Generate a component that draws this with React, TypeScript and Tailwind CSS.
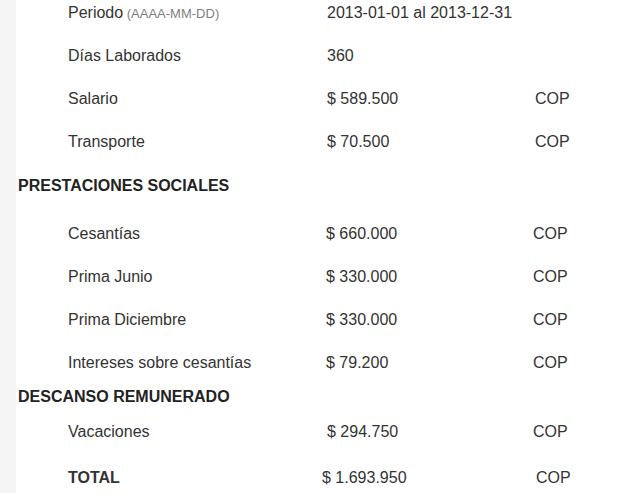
import React from "react";

type Row = {
  label: string;
  hint?: string;
  value: string;
  currency?: string;
  h: string;
  labelW: string;
  valueW: string;
  bold?: boolean;
};

const top: Row[] = [
  { label: "Periodo", hint: "(AAAA-MM-DD)", value: "2013-01-01 al 2013-12-31", h: "h-[43px]", labelW: "w-[311px]", valueW: "w-[208px]" },
  { label: "Días Laborados", value: "360", h: "h-[43px]", labelW: "w-[311px]", valueW: "w-[208px]" },
  { label: "Salario", value: "$ 589.500", currency: "COP", h: "h-[43px]", labelW: "w-[311px]", valueW: "w-[208px]" },
  { label: "Transporte", value: "$ 70.500", currency: "COP", h: "h-[43px]", labelW: "w-[311px]", valueW: "w-[208px]" },
];

const prestaciones: Row[] = [
  { label: "Cesantías", value: "$ 660.000", currency: "COP", h: "h-[43px]", labelW: "w-[310px]", valueW: "w-[207px]" },
  { label: "Prima Junio", value: "$ 330.000", currency: "COP", h: "h-[43px]", labelW: "w-[310px]", valueW: "w-[207px]" },
  { label: "Prima Diciembre", value: "$ 330.000", currency: "COP", h: "h-[43px]", labelW: "w-[310px]", valueW: "w-[207px]" },
  { label: "Intereses sobre cesantías", value: "$ 79.200", currency: "COP", h: "h-[43px]", labelW: "w-[310px]", valueW: "w-[207px]" },
];

function Line({ row }: { row: Row }) {
  return (
    <div className={`flex items-center ${row.h}`}>
      <div className={`${row.labelW} shrink-0 pl-[52px] ${row.bold ? "font-bold" : ""}`}>
        {row.label}
        {row.hint && <span className="text-[13px] text-[#808080]"> {row.hint}</span>}
      </div>
      <div className={`${row.valueW} shrink-0`}>{row.value}</div>
      <div>{row.currency}</div>
    </div>
  );
}

export default function App() {
  return (
    <div className="flex min-h-[493px] w-[641px] overflow-hidden bg-white font-['Liberation_Sans',Arial,sans-serif] text-[16px] text-[#333]">
      <div className="w-[16px] shrink-0 bg-[#f5f5f5]" />
      <div className="-mt-[9px] flex-1">
        {top.map((r) => (
          <Line key={r.label} row={r} />
        ))}

        <h3 className="flex h-[45px] items-center pl-[2px] text-[16px] font-bold text-[#222]">
          PRESTACIONES SOCIALES
        </h3>
        <div className="pt-[4px]">
          {prestaciones.map((r) => (
            <Line key={r.label} row={r} />
          ))}
        </div>

        <h3 className="flex h-[26px] items-center pl-[2px] text-[16px] font-bold text-[#222]">
          DESCANSO REMUNERADO
        </h3>
        <Line
          row={{ label: "Vacaciones", value: "$ 294.750", currency: "COP", h: "h-[44px]", labelW: "w-[311px]", valueW: "w-[206px]" }}
        />
        <Line
          row={{ label: "TOTAL", value: "$ 1.693.950", currency: "COP", h: "h-[48px]", labelW: "w-[306px]", valueW: "w-[214px]", bold: true }}
        />
      </div>
    </div>
  );
}
